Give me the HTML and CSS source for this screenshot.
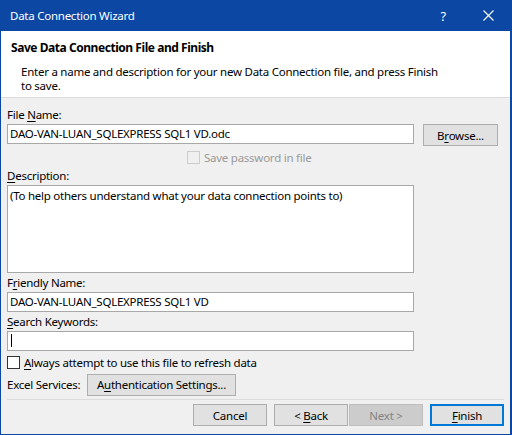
FILE: index.html
```html
<!DOCTYPE html>
<html lang="en">
<head>
  <meta charset="UTF-8" />
  <title>Data Connection Wizard</title>
  <link rel="stylesheet" href="styles.css">
</head>
<body>

  <div class="window">

    <!-- Title bar -->
    <div class="titlebar">
      <span class="title">Data Connection Wizard</span>
      <span class="help">?</span>
      <svg class="close" width="11" height="11" viewBox="0 0 11 11">
        <path d="M0.5 0.5 L10.5 10.5 M10.5 0.5 L0.5 10.5" stroke="#fff" stroke-width="1.1" fill="none"/>
      </svg>
    </div>

    <!-- Header -->
    <div class="header">
      <h1>Save Data Connection File and Finish</h1>
      <p>Enter a name and description for your new Data Connection file, and press Finish<br>to save.</p>
    </div>

    <!-- Form -->
    <div class="body">
      <div class="label">File <u>N</u>ame:</div>
      <div class="file-row">
        <div class="textbox">DAO-VAN-LUAN_SQLEXPRESS SQL1 VD.odc</div>
        <div class="btn browse"><span>B<u>r</u>owse...</span></div>
      </div>

      <div class="check-row save-pw">
        <span class="checkbox disabled"></span>
        <span>Save password in file</span>
      </div>

      <div class="label"><u>D</u>escription:</div>
      <div class="textbox textarea">(To help others understand what your data connection points to)</div>

      <div class="label">F<u>r</u>iendly Name:</div>
      <div class="textbox">DAO-VAN-LUAN_SQLEXPRESS SQL1 VD</div>

      <div class="label"><u>S</u>earch Keywords:</div>
      <div class="textbox"><span class="caret"></span></div>

      <div class="check-row always">
        <span class="checkbox"></span>
        <span><u>A</u>lways attempt to use this file to refresh data</span>
      </div>

      <div class="services-row">
        <span class="services-label">Excel Services:</span>
        <div class="btn auth"><span>A<u>u</u>thentication Settings...</span></div>
      </div>

      <div class="footer">
        <div class="btn"><span>Cancel</span></div>
        <div class="btn back"><span>&lt; <u>B</u>ack</span></div>
        <div class="btn disabled"><span>Next &gt;</span></div>
        <div class="btn default"><span><u>F</u>inish</span></div>
      </div>
    </div>

  </div>

</body>
</html>
```

FILE: styles.css
```css
body {
  margin: 0;
  font-family: 'Noto Sans', 'Open Sans', sans-serif;
  font-size: 11.5px;
  letter-spacing: -0.25px;
  color: #000;
}

.window {
  width: 512px;
  height: 435px;
  box-sizing: border-box;
  background-color: #0b47a3;
  padding: 0 2px 1px 1px;
  display: flex;
  flex-direction: column;
}

.titlebar {
  height: 31px;
  flex-shrink: 0;
  display: flex;
  align-items: center;
  color: #fff;
  padding-left: 9px;
}

.title {
  flex: 1;
}

.help {
  font-size: 13px;
  margin-right: 37px;
}

.close {
  margin-right: 16px;
}

.header {
  height: 66px;
  flex-shrink: 0;
  background-color: #fff;
  border-bottom: 1px solid #dadada;
}

.header h1 {
  margin: 0;
  padding: 9px 0 0 10px;
  font-size: 12px;
  font-weight: bold;
  letter-spacing: -0.45px;
  line-height: 16px;
}

.header p {
  margin: 9px 0 0 20px;
  line-height: 14px;
}

.body {
  flex: 1;
  background-color: #f0f0f0;
  padding: 7px 0 0 6px;
}

.label {
  height: 19px;
  line-height: 18px;
  padding-top: 1px;
  box-sizing: border-box;
}

u {
  text-underline-offset: 2px;
}

.textbox {
  width: 407px;
  height: 20px;
  box-sizing: border-box;
  border: 1px solid #a8a8a8;
  background-color: #fff;
  padding: 0 2px;
  line-height: 18px;
  white-space: nowrap;
}

.textarea {
  height: 88px;
  padding-top: 1px;
}

.caret {
  display: inline-block;
  width: 1px;
  height: 13px;
  background-color: #000;
  margin: 2px 0 0 1px;
  vertical-align: top;
}

.file-row {
  display: flex;
  align-items: flex-start;
  gap: 9px;
  height: 22px;
}

.btn {
  height: 22px;
  box-sizing: border-box;
  border: 1px solid #adadad;
  background-color: #e1e1e1;
  display: flex;
  align-items: center;
  justify-content: center;
  white-space: nowrap;
}

.browse {
  width: 75px;
}

.check-row {
  display: flex;
  align-items: center;
  gap: 4px;
}

.checkbox {
  width: 13px;
  height: 13px;
  box-sizing: border-box;
  border: 1px solid #333;
  background-color: #fff;
}

.checkbox.disabled {
  border-color: #cccccc;
  background-color: #f0f0f0;
}

.save-pw {
  height: 20px;
  padding-top: 2px;
  box-sizing: border-box;
  margin-left: 180px;
  color: #9a9a9a;
}

.always {
  height: 22px;
}

.services-row {
  display: flex;
  align-items: center;
  height: 23px;
}

.services-label {
  width: 80px;
}

.auth {
  width: 149px;
}

.footer {
  margin: 3px 6px 0 0;
  padding-top: 4px;
  border-top: 1px solid #dcdcdc;
  display: flex;
  justify-content: flex-end;
}

.footer .btn {
  width: 74px;
}

.footer .back {
  margin-left: 7px;
}

.footer .btn.disabled {
  margin-left: 1px;
  background-color: #cccccc;
  border-color: #bfbfbf;
  color: #838383;
}

.footer .btn.default {
  margin-left: 7px;
  border: 2px solid #0078d7;
}
```
